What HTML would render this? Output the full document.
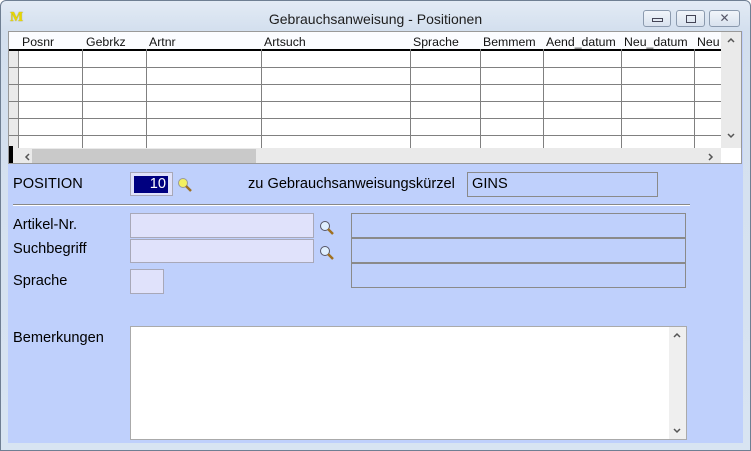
<!DOCTYPE html>
<html><head><meta charset="utf-8"><style>
*{margin:0;padding:0;box-sizing:border-box}
body{width:751px;height:451px;overflow:hidden;font-family:"Liberation Sans",sans-serif;background:#fff}
.win{position:absolute;left:0;top:0;width:751px;height:451px;background:linear-gradient(#e3ebf5,#d3dfee 30px,#d8e4f2);border:1px solid #6f7f93;border-radius:6px 6px 0 0}
.abs{position:absolute}
.title{left:0;width:751px;top:11px;text-align:center;font-size:14px;color:#1e1e1e}
.btn{top:10px;height:17px;border:1px solid #8b9aae;border-radius:3px;background:linear-gradient(#f1f5fa,#d9e2ee)}
.client{left:8px;top:31px;width:735px;height:412px;background:#bfd0fc}
.grid{left:8px;top:31px;width:734px;height:133px;background:#fff;border:1px solid #999;overflow:hidden}
.hd{font-size:12.3px;color:#111;top:3px}
.vl{width:1px;background:#808080}
.hl{height:1px;background:#808080}
.lbl{font-size:14.6px;color:#000}
.box{border:1px solid #8a8a8a}
.in{background:#e0e2fb;border:1px solid #a8a8b8}
.ch{fill:none;stroke:#555;stroke-width:1.5}
</style></head><body>
<div class="win"></div>
<div class="abs" style="left:10px;top:10px;font:bold 14px 'Liberation Serif',serif;color:#e8d800;text-shadow:0 0 1px #887700">M</div>
<div class="abs title">Gebrauchsanweisung - Positionen</div>
<div class="abs btn" style="left:643px;width:28px"><div class="abs" style="left:8px;top:7px;width:11px;height:4px;border:1px solid #445"></div></div>
<div class="abs btn" style="left:676px;width:29px"><div class="abs" style="left:9px;top:4px;width:10px;height:8px;border:1px solid #445"></div></div>
<div class="abs btn" style="left:709px;width:31px;text-align:center;font-size:12px;color:#556;line-height:15px">✕</div>
<div class="abs client"></div>
<div class="abs grid">
 <div class="abs" style="left:0;top:0;width:10px;height:133px;background:#eaeaea;border-right:1px solid #888"></div>
 <div class="abs" style="left:0;top:114px;width:4px;height:18px;background:#000"></div>
 <div class="abs" style="left:0;top:0;width:712px;height:17px;background:#fbfcff"></div>
 <div class="abs" style="left:0;top:17px;width:712px;height:2px;background:#000"></div>
 <div class="abs hl" style="left:0;top:35px;width:712px"></div>
 <div class="abs hl" style="left:0;top:52px;width:712px"></div>
 <div class="abs hl" style="left:0;top:69px;width:712px"></div>
 <div class="abs hl" style="left:0;top:86px;width:712px"></div>
 <div class="abs hl" style="left:0;top:103px;width:712px"></div>
 <div class="abs vl" style="left:73px;top:17px;height:100px"></div>
 <div class="abs vl" style="left:137px;top:17px;height:100px"></div>
 <div class="abs vl" style="left:252px;top:17px;height:100px"></div>
 <div class="abs vl" style="left:401px;top:17px;height:100px"></div>
 <div class="abs vl" style="left:471px;top:17px;height:100px"></div>
 <div class="abs vl" style="left:534px;top:17px;height:100px"></div>
 <div class="abs vl" style="left:612px;top:17px;height:100px"></div>
 <div class="abs vl" style="left:685px;top:17px;height:100px"></div>
 <div class="abs hd" style="left:13px">Posnr</div>
 <div class="abs hd" style="left:77px">Gebrkz</div>
 <div class="abs hd" style="left:140px">Artnr</div>
 <div class="abs hd" style="left:255px">Artsuch</div>
 <div class="abs hd" style="left:404px">Sprache</div>
 <div class="abs hd" style="left:474px">Bemmem</div>
 <div class="abs hd" style="left:537px">Aend_datum</div>
 <div class="abs hd" style="left:615px">Neu_datum</div>
 <div class="abs hd" style="left:688px">Neu</div>
 <div class="abs" style="left:712px;top:0;width:21px;height:116px;background:#eaeaea"></div>
 <svg class="abs" style="left:717px;top:4px" width="10" height="8"><path class="ch" d="M2 6 L5 3 L8 6"/></svg>
 <svg class="abs" style="left:717px;top:100px" width="10" height="8"><path class="ch" d="M2 2 L5 5 L8 2"/></svg>
 <div class="abs" style="left:4px;top:116px;width:708px;height:16px;background:#eaeaea"></div>
 <div class="abs" style="left:23px;top:117px;width:224px;height:14px;background:#c9c9c9"></div>
 <svg class="abs" style="left:14px;top:120px" width="8" height="10"><path class="ch" d="M6 2 L3 5 L6 8"/></svg>
 <svg class="abs" style="left:698px;top:120px" width="8" height="10"><path class="ch" d="M2 2 L5 5 L2 8"/></svg>
</div>
<div class="abs lbl" style="left:13px;top:176px">POSITION</div>
<div class="abs" style="left:130px;top:172px;width:43px;height:24px;background:#e0e2fb;border:1px solid #a8a8b8"><div class="abs" style="left:3px;top:3px;width:34px;height:17px;background:#000080;color:#fff;font-size:14.6px;text-align:right;padding-right:2px;line-height:17px">10</div></div>
<svg class="abs" style="left:177px;top:177px" width="16" height="16"><circle cx="6" cy="6" r="4.5" fill="#f4f060" stroke="#999" stroke-width="1"/><line x1="9" y1="9" x2="14" y2="14" stroke="#a07020" stroke-width="2.5"/></svg>
<div class="abs lbl" style="left:248px;top:176px">zu Gebrauchsanweisungskürzel</div>
<div class="abs box" style="left:467px;top:172px;width:191px;height:25px;font-size:14.6px;padding:3px 4px">GINS</div>
<div class="abs" style="left:13px;top:204px;width:677px;height:1px;background:#888"></div>
<div class="abs" style="left:13px;top:205px;width:677px;height:1px;background:#fff"></div>
<div class="abs lbl" style="left:13px;top:217px">Artikel-Nr.</div>
<div class="abs lbl" style="left:13px;top:241px">Suchbegriff</div>
<div class="abs lbl" style="left:13px;top:273px">Sprache</div>
<div class="abs lbl" style="left:13px;top:330px">Bemerkungen</div>
<div class="abs in" style="left:130px;top:213px;width:184px;height:25px"></div>
<div class="abs in" style="left:130px;top:239px;width:184px;height:24px"></div>
<div class="abs in" style="left:130px;top:269px;width:34px;height:25px"></div>
<svg class="abs" style="left:319px;top:220px" width="16" height="16"><circle cx="6" cy="6" r="4.5" fill="#dfefff" stroke="#556" stroke-width="1"/><line x1="9" y1="9" x2="14" y2="14" stroke="#a07020" stroke-width="2.5"/></svg>
<svg class="abs" style="left:319px;top:245px" width="16" height="16"><circle cx="6" cy="6" r="4.5" fill="#dfefff" stroke="#556" stroke-width="1"/><line x1="9" y1="9" x2="14" y2="14" stroke="#a07020" stroke-width="2.5"/></svg>
<div class="abs box" style="left:351px;top:213px;width:335px;height:25px"></div>
<div class="abs box" style="left:351px;top:238px;width:335px;height:25px"></div>
<div class="abs box" style="left:351px;top:263px;width:335px;height:25px"></div>
<div class="abs" style="left:130px;top:326px;width:557px;height:114px;background:#fff;border:1px solid #aaa"></div>
<div class="abs" style="left:669px;top:327px;width:17px;height:112px;background:#efefef"></div>
<svg class="abs" style="left:672px;top:331px" width="10" height="8"><path class="ch" d="M2 6 L5 3 L8 6"/></svg>
<svg class="abs" style="left:672px;top:427px" width="10" height="8"><path class="ch" d="M2 2 L5 5 L8 2"/></svg>
</body></html>
